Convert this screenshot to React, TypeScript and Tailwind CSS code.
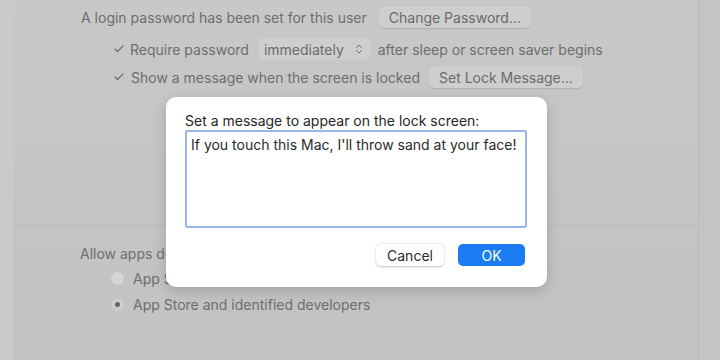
import { Check, ChevronsUpDown } from "lucide-react";

function Pill({ label, className = "" }: { label: string; className?: string }) {
  return (
    <span
      className={`inline-flex h-[22px] items-center rounded-[5px] bg-[#cecece] px-[10px] text-[#6b6b6b] shadow-[0_0.5px_1px_rgba(0,0,0,0.12)] ${className}`}
    >
      {label}
    </span>
  );
}

export default function App() {
  return (
    <div
      className="relative h-[360px] w-[720px] overflow-hidden bg-[#c6c6c6] text-[14px] text-[#6d6d6d]"
      style={{ fontFamily: 'Inter, "Liberation Sans", sans-serif' }}
    >
      <div className="flex h-full">
        <div className="w-[13px] shrink-0 bg-[#cacaca]" />
        <div className="flex grow flex-col bg-gradient-to-b from-[#c8c8c8] to-[#c2c2c2]">
          {/* top section */}
          <div className="flex flex-col pl-[68px] pt-[6px]">
            <div className="flex items-center gap-[12px]">
              <span>A login password has been set for this user</span>
              <Pill label="Change Password..." />
            </div>
            <div className="mt-[10px] flex items-center pl-[32px]">
              <Check size={12} strokeWidth={2.5} className="mr-[5px] text-[#707070]" />
              <span>Require password</span>
              <span className="ml-[9px] inline-flex h-[22px] items-center rounded-[5px] bg-[#cecece] pl-[6px] pr-[6px] text-[#6b6b6b]">
                immediately
                <ChevronsUpDown size={12} strokeWidth={2} className="ml-[9px]" />
              </span>
              <span className="ml-[7px]">after sleep or screen saver begins</span>
            </div>
            <div className="mt-[6px] flex items-center pl-[32px]">
              <Check size={12} strokeWidth={2.5} className="mr-[6px] text-[#707070]" />
              <span>Show a message when the screen is locked</span>
              <Pill label="Set Lock Message..." className="ml-[9px]" />
            </div>
          </div>

          <div className="mr-[4px] mt-[137px] h-px bg-[#b9b9b9]" />

          {/* bottom section */}
          <div className="flex flex-col pl-[67px] pt-[17px]">
            <span>Allow apps downloaded from:</span>
            <div className="mt-[4px] flex items-center gap-[9px] pl-[31px]">
              <span className="h-[13px] w-[13px] rounded-full bg-[#d6d6d6]" />
              <span>App Store</span>
            </div>
            <div className="mt-[5px] flex items-center gap-[9px] pl-[31px]">
              <span className="flex h-[13px] w-[13px] items-center justify-center rounded-full bg-[#cdcdcd]">
                <span className="h-[5px] w-[5px] rounded-full bg-[#666]" />
              </span>
              <span>App Store and identified developers</span>
            </div>
          </div>
        </div>
        <div className="w-[22px] shrink-0 border-l border-[#bababa] bg-[#c4c4c4]" />
      </div>

      {/* sheet dialog */}
      <div className="absolute left-[166px] top-[97px] flex h-[190px] w-[381px] flex-col rounded-[10px] bg-white pl-[19px] pr-[20px] pt-[15px] text-[#262626] shadow-[0_4px_14px_rgba(0,0,0,0.18)]">
        <span className="leading-[17px]">Set a message to appear on the lock screen:</span>
        <div className="mt-[1px] h-[98px] rounded-[2px] border-2 border-[#9bb4ea] px-[4px] pt-[4px] leading-[17px] text-[#2a2a2a]">
          If you touch this Mac, I'll throw sand at your face!
        </div>
        <div className="mt-[16px] flex justify-end gap-[14px] pr-[2px]">
          <span className="flex h-[22px] w-[68px] items-center justify-center rounded-[5px] bg-white text-[#2a2a2a] shadow-[0_0.5px_2px_rgba(0,0,0,0.25)]">
            Cancel
          </span>
          <span className="flex h-[22px] w-[67px] items-center justify-center rounded-[5px] bg-[#1b7cf2] text-white">
            OK
          </span>
        </div>
      </div>
    </div>
  );
}
